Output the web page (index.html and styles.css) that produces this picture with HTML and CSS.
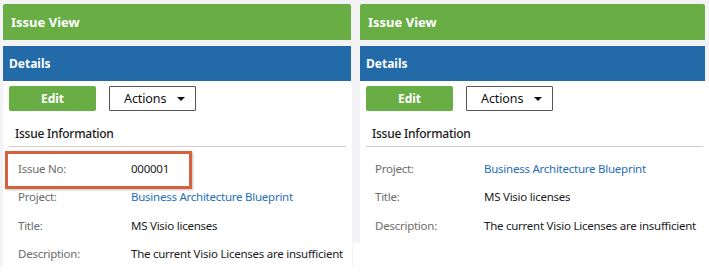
FILE: index.html
```html
<!DOCTYPE html>
<html>
<head>
<meta charset="utf-8">
<link rel="stylesheet" href="styles.css">
</head>
<body>
<div class="shot">
  <div class="pane pane-left">
    <div class="bar bar-green">Issue View</div>
    <div class="bar bar-blue">Details</div>
    <div class="body">
      <div class="toolbar">
        <button class="btn btn-edit">Edit</button>
        <button class="btn btn-actions"><span>Actions</span><span class="caret"></span></button>
      </div>
      <div class="section-title">Issue Information</div>
      <div class="rows">
        <div class="row hl"><span class="label">Issue No:</span><span class="value">000001</span></div>
        <div class="row"><span class="label">Project:</span><span class="value link">Business Architecture Blueprint</span></div>
        <div class="row"><span class="label">Title:</span><span class="value">MS Visio licenses</span></div>
        <div class="row"><span class="label">Description:</span><span class="value">The current Visio Licenses are insufficient</span></div>
      </div>
    </div>
  </div>
  <div class="pane pane-right">
    <div class="bar bar-green">Issue View</div>
    <div class="bar bar-blue">Details</div>
    <div class="body">
      <div class="toolbar">
        <button class="btn btn-edit">Edit</button>
        <button class="btn btn-actions"><span>Actions</span><span class="caret"></span></button>
      </div>
      <div class="section-title">Issue Information</div>
      <div class="rows rows-narrow">
        <div class="row"><span class="label">Project:</span><span class="value link">Business Architecture Blueprint</span></div>
        <div class="row"><span class="label">Title:</span><span class="value">MS Visio licenses</span></div>
        <div class="row"><span class="label">Description:</span><span class="value">The current Visio Licenses are insufficient</span></div>
      </div>
    </div>
  </div>
</div>
</body>
</html>
```
FILE: styles.css
```css
* { box-sizing: border-box; }
html, body { margin: 0; padding: 0; background: #ffffff; }
body { font-family: "Noto Sans", "Open Sans", sans-serif; font-size: 11.5px; letter-spacing: -0.25px; color: #222; }

.shot { display: flex; align-items: flex-start; width: 709px; height: 272px; overflow: hidden; }

.pane { background: #f3f3f5; padding-top: 4px; display: flex; flex-direction: column; flex-shrink: 0; }
.pane-left { width: 353px; height: 267px; padding-left: 3px; padding-right: 2px; }
.pane-right { width: 356px; height: 243px; padding-left: 7px; padding-right: 4px; }

.bar { color: #fff; font-weight: 700; display: flex; align-items: center; flex-shrink: 0; letter-spacing: 0; }
.bar-green { background: #69ad45; height: 36px; padding-left: 8px; font-size: 13px; border-radius: 2px 2px 0 0; }
.bar-blue { background: #226aa8; height: 35px; margin-top: 6px; padding-left: 6px; font-size: 12px; }

.pane-left .body { margin-right: -1px; }
.pane-right .body { margin-right: -4px; }
.body { background: #fff; flex: 1 1 auto; min-height: 0; padding: 5px 0 0 6px; }

.toolbar { display: flex; gap: 13px; height: 25px; }
.btn { font-family: inherit; height: 25px; width: 87px; padding: 0; cursor: pointer; flex-shrink: 0; }
.btn-edit { background: #69ad45; border: none; border-radius: 2px; color: #fff; font-weight: 700; font-size: 12px; letter-spacing: 0; }
.btn-actions { background: #fff; border: 1px solid #555; border-radius: 1px; color: #111; font-size: 12.5px; letter-spacing: -0.1px; display: flex; align-items: center; justify-content: space-between; padding: 0 10px 0 14px; }
.caret { width: 0; height: 0; border-left: 4px solid transparent; border-right: 4px solid transparent; border-top: 4px solid #111; }

.section-title { margin: 14px 0 0 6px; font-size: 12px; font-weight: 500; color: #1a1a1a; line-height: 17px; }
.rows { margin-top: 4px; border-top: 1px solid #cfcfcf; margin-right: 6px; padding-top: 7px; }

.row { position: relative; display: flex; height: 28.5px; align-items: center; padding-left: 9px; }
.label { width: 113px; flex-shrink: 0; color: #6b6b6b; }
.rows-narrow .label { width: 109px; }
.value { color: #1b1b1b; white-space: nowrap; }
.link { color: #1f6fb8; }

.hl::after { content: ""; position: absolute; left: -4px; top: -3px; width: 181px; height: 32px; border: 3px solid #d5623d; box-shadow: 1px 1px 2px rgba(0,0,0,0.25); }
```
